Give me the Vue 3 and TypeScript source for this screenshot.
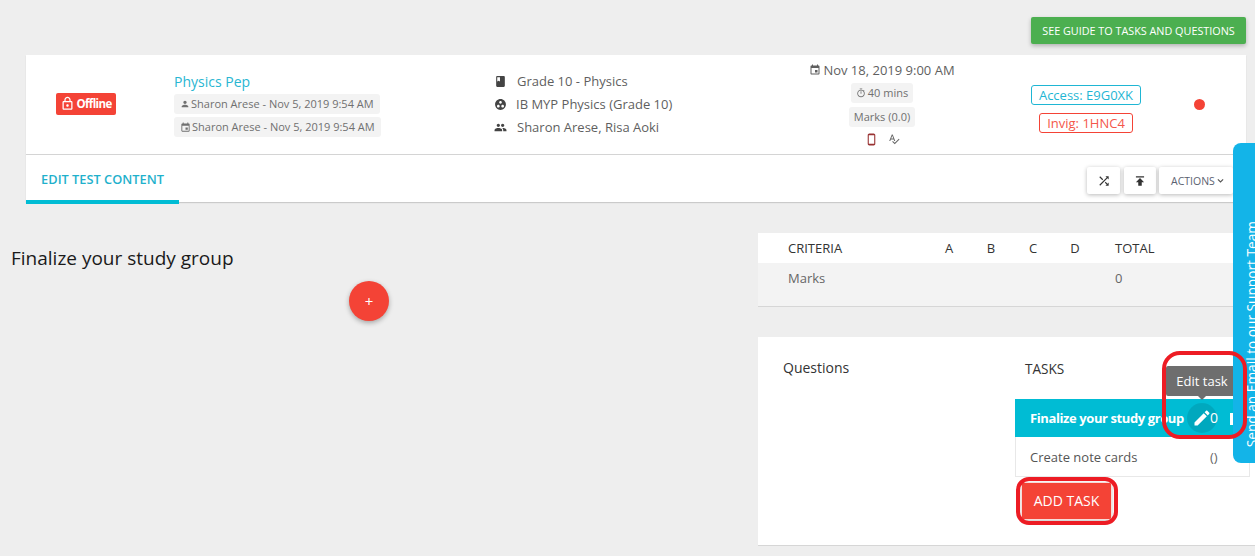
<script setup lang="ts">
const paths = {
  person: 'M12 12c2.21 0 4-1.79 4-4s-1.79-4-4-4-4 1.79-4 4 1.79 4 4 4zm0 2c-2.67 0-8 1.34-8 4v2h16v-2c0-2.66-5.33-4-8-4z',
  event: 'M17 12h-5v5h5v-5zM16 1v2H8V1H6v2H5c-1.11 0-1.99.9-1.99 2L3 19c0 1.1.89 2 2 2h14c1.1 0 2-.9 2-2V5c0-1.1-.9-2-2-2h-1V1h-2zm3 18H5V8h14v11z',
  timer: 'M15 1H9v2h6V1zm-4 13h2V8h-2v6zm8.03-6.61l1.42-1.42c-.43-.51-.9-.99-1.41-1.41l-1.42 1.42C16.07 4.74 14.12 4 12 4c-4.97 0-9 4.03-9 9s4.02 9 9 9 9-4.03 9-9c0-2.12-.74-4.07-1.97-5.61zM12 20c-3.87 0-7-3.13-7-7s3.13-7 7-7 7 3.13 7 7-3.13 7-7 7z',
  book: 'M18 2H6c-1.1 0-2 .9-2 2v16c0 1.1.9 2 2 2h12c1.1 0 2-.9 2-2V4c0-1.1-.9-2-2-2zM6 4h5v8l-2.5-1.5L6 12V4z',
  work: 'M12 2C6.48 2 2 6.48 2 12s4.48 10 10 10 10-4.48 10-10S17.52 2 12 2zM8 17.5c-1.38 0-2.5-1.12-2.5-2.5s1.12-2.5 2.5-2.5 2.5 1.12 2.5 2.5-1.12 2.5-2.5 2.5zM9.5 8c0-1.38 1.12-2.5 2.5-2.5s2.5 1.12 2.5 2.5-1.12 2.5-2.5 2.5S9.5 9.38 9.5 8zm6.5 9.5c-1.38 0-2.5-1.12-2.5-2.5s1.12-2.5 2.5-2.5 2.5 1.12 2.5 2.5-1.12 2.5-2.5 2.5z',
  group: 'M16 11c1.66 0 2.99-1.34 2.99-3S17.66 5 16 5c-1.66 0-3 1.34-3 3s1.34 3 3 3zm-8 0c1.66 0 2.99-1.34 2.99-3S9.66 5 8 5C6.34 5 5 6.34 5 8s1.34 3 3 3zm0 2c-2.33 0-7 1.17-7 3.5V19h14v-2.5c0-2.33-4.67-3.5-7-3.5zm8 0c-.29 0-.62.02-.97.05 1.16.84 1.97 1.97 1.97 3.45V19h6v-2.5c0-2.33-4.67-3.5-7-3.5z',
  spell: 'M12.45 16h2.09L9.43 3H7.57L2.46 16h2.09l1.12-3h5.64l1.14 3zm-6.02-5L8.5 5.48 10.57 11H6.43zm15.16.59l-8.09 8.09L9.83 16l-1.41 1.41 5.09 5.09L23 13l-1.41-1.41z',
  shuffle: 'M10.59 9.17L5.41 4 4 5.41l5.17 5.17 1.42-1.41zM14.5 4l2.04 2.04L4 18.59 5.41 20 17.96 7.46 20 9.5V4h-5.5zm.33 9.41l-1.41 1.41 3.13 3.13L14.5 20H20v-5.5l-2.04 2.04-3.13-3.13z',
  publish: 'M5 4v2h14V4H5zm0 10h4v6h6v-6h4l-7-7-7 7z',
  edit: 'M3 17.25V21h3.75L17.81 9.94l-3.75-3.75L3 17.25zM20.71 7.04c.39-.39.39-1.02 0-1.41l-2.34-2.34c-.39-.39-1.02-.39-1.41 0l-1.83 1.83 3.75 3.75 1.83-1.83z',
  lock: 'M18 8h-1V6c0-2.76-2.24-5-5-5S7 3.24 7 6v2H6c-1.1 0-2 .9-2 2v10c0 1.1.9 2 2 2h12c1.1 0 2-.9 2-2V10c0-1.1-.9-2-2-2zM9 6c0-1.66 1.34-3 3-3s3 1.34 3 3v2H9V6zm9 14H6V10h12v10zm-6-3c1.1 0 2-.9 2-2s-.9-2-2-2-2 .9-2 2 .9 2 2 2z',
  phone: 'M16 1H8C6.34 1 5 2.34 5 4v16c0 1.66 1.34 3 3 3h8c1.66 0 3-1.34 3-3V4c0-1.66-1.34-3-3-3zm1 19H7V4h10v16z',
}
const criteria = ['A', 'B', 'C', 'D']
</script>

<template>
  <div class="page">
    <div class="topbar">
      <button class="guide">SEE GUIDE TO TASKS AND QUESTIONS</button>
    </div>

    <section class="test-card">
      <div class="summary">
        <div class="col-status">
          <span class="offline">
            <svg viewBox="0 0 24 24" width="15" height="15"><path :d="paths.lock" /></svg>Offline
          </span>
        </div>
        <div class="col-title">
          <a class="title-link">Physics Pep</a>
          <span class="chip"><svg viewBox="0 0 24 24" width="10" height="10"><path :d="paths.person" /></svg>Sharon Arese - Nov 5, 2019 9:54 AM</span>
          <span class="chip"><svg viewBox="0 0 24 24" width="11" height="11"><path :d="paths.event" /></svg>Sharon Arese - Nov 5, 2019 9:54 AM</span>
        </div>
        <div class="col-meta">
          <div class="meta-row"><svg viewBox="0 0 24 24" width="13" height="13"><path :d="paths.book" /></svg><span class="meta-a">Grade 10 - Physics</span></div>
          <div class="meta-row"><svg viewBox="0 0 24 24" width="13" height="13"><path :d="paths.work" /></svg><span class="meta-b">IB MYP Physics (Grade 10)</span></div>
          <div class="meta-row"><svg viewBox="0 0 24 24" width="13" height="13"><path :d="paths.group" /></svg><span class="meta-a">Sharon Arese, Risa Aoki</span></div>
        </div>
        <div class="col-date">
          <div class="date"><svg viewBox="0 0 24 24" width="12" height="12"><path :d="paths.event" /></svg>Nov 18, 2019 9:00 AM</div>
          <span class="chip small"><svg viewBox="0 0 24 24" width="10" height="10"><path :d="paths.timer" /></svg>40 mins</span>
          <span class="chip small marks-chip">Marks (0.0)</span>
          <div class="date-icons">
            <svg class="red-icon" viewBox="0 0 24 24" width="13" height="13"><path :d="paths.phone" /></svg>
            <svg viewBox="0 0 24 24" width="12" height="12"><path :d="paths.spell" /></svg>
          </div>
        </div>
        <div class="col-codes">
          <span class="code access">Access: E9G0XK</span>
          <span class="code invig">Invig: 1HNC4</span>
        </div>
        <div class="col-dot"><span class="dot"></span></div>
      </div>

      <div class="tabbar">
        <div class="tab">EDIT TEST CONTENT</div>
        <div class="actions">
          <button class="act square-a"><svg viewBox="0 0 24 24" width="14" height="14"><path :d="paths.shuffle" /></svg></button>
          <button class="act square-b"><svg viewBox="0 0 24 24" width="14" height="14"><path :d="paths.publish" /></svg></button>
          <button class="act wide">ACTIONS<svg viewBox="0 0 24 24" width="7" height="7" class="chev"><path d="M3 8l9 9 9-9" /></svg></button>
        </div>
      </div>
    </section>

    <main class="content">
      <div class="left">
        <h2>Finalize your study group</h2>
        <div class="add-wrap"><button class="fab">+</button></div>
      </div>
      <div class="right">
        <section class="marks">
          <div class="marks-head">
            <span class="c-name">CRITERIA</span>
            <span v-for="c in criteria" :key="c" class="c-letter">{{ c }}</span>
            <span class="c-total">TOTAL</span>
          </div>
          <div class="marks-row">
            <span class="c-name">Marks</span>
            <span v-for="c in criteria" :key="c" class="c-letter"></span>
            <span class="c-total">0</span>
          </div>
        </section>

        <section class="tasks-card">
          <div class="questions">Questions</div>
          <div class="tasks">
            <div class="tasks-title">TASKS</div>
            <div class="task-list">
              <div class="task active">
                <span class="task-name">Finalize your study group</span>
                <span class="pen">
                  <svg viewBox="0 0 24 24" width="20" height="20"><path :d="paths.edit" /></svg>
                </span>
                <span class="count">0</span>
                <span class="cut-bar"></span>
                <div class="tooltip">Edit task</div>
              </div>
              <div class="task">
                <span class="task-name">Create note cards</span>
                <span class="count plain">()</span>
              </div>
            </div>
            <button class="add-task">ADD TASK</button>
          </div>
        </section>
      </div>
    </main>

    <aside class="support"><span>Send an Email to our Support Team</span></aside>
    <div class="ink ink-edit"></div>
    <div class="ink ink-add"></div>
  </div>
</template>

<style>
html, body { margin: 0; background: #eeeeee; overflow: hidden; }
</style>

<style scoped>
.page {
  position: relative;
  width: 1255px;
  height: 556px;
  overflow: hidden;
  background: #eeeeee;
  font-family: "Open Sans", "Noto Sans", sans-serif;
  color: #555;
}
svg { fill: currentColor; flex: none; }
button { font-family: inherit; border: 0; cursor: pointer; }

.topbar { display: flex; justify-content: flex-end; padding: 17px 9px 0 0; height: 55px; box-sizing: border-box; }
.guide {
  width: 215px; height: 27px; padding: 0; background: #4caf50; color: #fff; font-size: 10.8px;
  border-radius: 2px; box-shadow: 0 2px 4px rgba(0,0,0,.25);
}

.test-card { margin: 0 9px 0 26px; background: #fff; box-shadow: 0 1px 1px rgba(0,0,0,.15); height: 147px; }
.summary {
  display: grid; grid-template-columns: 148px 320px 286px 204px 204px 22px;
  height: 99px; border-bottom: 1px solid #d4d4d4; box-sizing: content-box; align-items: center;
}
.col-status { padding-left: 30px; }
.offline {
  display: inline-flex; align-items: center; justify-content: center; width: 60px; height: 22px;
  background: #f44336; color: #fff; border-radius: 2px; font-size: 11.5px; font-weight: 700; gap: 1px; letter-spacing: -.6px;
}
.col-title { display: flex; flex-direction: column; align-items: flex-start; gap: 3px; }
.title-link { color: #29b6d2; font-size: 14px; line-height: 19px; }
.chip {
  display: inline-flex; align-items: center; gap: 1px; background: #f3f3f3; border-radius: 3px;
  font-size: 11px; line-height: 20px; padding: 0 6px; color: #707070; white-space: nowrap;
}
.col-meta { display: flex; flex-direction: column; font-size: 13px; color: #5f5f5f; margin-top: -1px; }
.meta-row { display: flex; align-items: center; height: 23px; }
.meta-row svg { color: #444; }
.meta-a { margin-left: 10px; }
.meta-b { margin-left: 9px; }
.col-date { display: flex; flex-direction: column; align-items: center; gap: 3px; font-size: 13px; color: #5f5f5f; margin-top: -2px; }
.date { display: flex; align-items: center; gap: 2px; line-height: 18px; height: 18px; margin-bottom: 1px; }
.chip.small { padding: 0 5px; line-height: 20px; gap: 2px; }
.marks-chip { margin-top: 1px; }
.date-icons { display: flex; gap: 10px; height: 14px; align-items: center; color: #666; margin: 2px 0 0 1px; }
.red-icon { color: #933; }
.col-codes { display: flex; flex-direction: column; align-items: center; gap: 8px; margin-top: 8px; }
.code { font-size: 13px; line-height: 18px; border: 1px solid; border-radius: 3px; padding: 0 7px; }
.access { color: #1fb6d4; border-color: #1fb6d4; }
.invig { color: #f4574a; border-color: #f44336; }
.col-dot { display: flex; justify-content: center; }
.dot { width: 11px; height: 11px; background: #f44336; border-radius: 50%; }

.tabbar { display: flex; justify-content: space-between; height: 47px; }
.tab {
  width: 153px; height: 49px; box-sizing: border-box; border-bottom: 4px solid #00bcd4; color: #1fb1cc; font-size: 12.8px;
  font-weight: 600; text-align: center; line-height: 49px; white-space: nowrap; margin-bottom: -2px;
}
.actions { display: flex; padding: 12px 13px 0 0; height: 27px; }
.act {
  height: 27px; background: #fff; color: #333; border-radius: 2px; box-shadow: 0 1px 4px rgba(0,0,0,.28); padding: 0;
  display: flex; align-items: center; justify-content: center;
}
.square-a { width: 33px; margin-right: 4px; }
.square-b { width: 32px; margin-right: 3px; }
.wide { width: 74px; font-size: 10.5px; color: #5b6270; gap: 2px; justify-content: flex-start; padding-left: 12px; box-sizing: border-box; }
.chev { fill: none; stroke: #555; stroke-width: 4; }

.content { display: flex; align-items: flex-start; padding-top: 31px; }
.left { width: 758px; flex: none; }
.left h2 { margin: 0; padding: 12px 0 0 11px; font-size: 19px; line-height: 26px; font-weight: 400; color: #1a1a1a; }
.add-wrap { padding: 10px 0 0 349px; }
.fab {
  width: 40px; height: 40px; border-radius: 50%; background: #f44336; color: #fff; font-size: 15px; padding: 0;
  box-shadow: 0 2px 5px rgba(0,0,0,.3); display: block;
}
.right { width: 497px; flex: none; }
.marks { margin-right: 9px; background: #fff; height: 74px; border-bottom: 1px solid #d6d6d6; box-sizing: border-box; font-size: 13px; }
.marks-head, .marks-row { display: flex; padding-left: 30px; }
.marks-head { height: 30px; line-height: 31px; color: #333; }
.marks-row { height: 43px; line-height: 31px; background: #f3f3f3; color: #666; }
.c-name { width: 140px; flex: none; }
.c-letter { width: 42px; text-align: center; flex: none; }
.c-total { padding-left: 19px; }

.tasks-card {
  margin-top: 30px; background: #fff; height: 208px; display: flex; border-bottom: 1px solid #d6d6d6; box-sizing: content-box;
}
.questions { width: 257px; box-sizing: border-box; padding: 23px 0 0 25px; font-size: 14px; line-height: 16px; color: #333; }
.tasks { width: 235px; flex: none; }
.tasks-title { height: 62px; box-sizing: border-box; padding: 23px 0 0 10px; font-size: 13.6px; line-height: 17px; color: #333; }
.task-list { border: 1px solid #e8e8e8; border-top: 0; }
.task { position: relative; display: flex; align-items: center; height: 39px; padding-left: 14px; font-size: 13px; color: #555; }
.task.active { height: 38px; background: #00bcd4; color: #fff; font-weight: 700; margin: 0 -1px; padding-left: 15px; }
.task-name { width: 172px; white-space: nowrap; flex: none; }
.task.active .task-name { font-size: 13px; letter-spacing: -.4px; }
.pen {
  position: absolute; left: 172px; top: 4px; width: 30px; height: 30px; border-radius: 50%;
  background: rgba(0,0,0,.1); display: flex; align-items: center; justify-content: center;
}
.count { position: absolute; left: 195px; top: 10px; font-size: 14px; font-weight: 400; line-height: 18px; }
.count.plain { left: 194px; top: 11px; color: #666; font-size: 13px; }
.cut-bar { position: absolute; left: 215px; top: 14px; width: 3px; height: 12px; background: #fff; }
.tooltip {
  position: absolute; left: 151px; top: -33px; width: 72px; height: 30px; background: #6e6e6e; color: #fff; font-size: 13px;
  font-weight: 400; line-height: 30px; text-align: center; border-radius: 2px; letter-spacing: 0;
}
.tooltip::after {
  content: ""; position: absolute; left: 32px; top: 30px; border: 4px solid transparent; border-top-color: #6e6e6e; border-bottom: 0;
}
.add-task {
  display: block; margin: 5px 0 0 6px; width: 91px; height: 38px; padding: 0 0 2px; background: #f44336; color: #fff;
  font-size: 14px; border-radius: 2px; border: 1px solid #f6dcd9; box-shadow: 0 1px 3px rgba(0,0,0,.25);
}

.support {
  position: absolute; left: 1233px; top: 143px; width: 28px; height: 320px; background: #13b4e8;
  border-radius: 8px 0 0 8px;
}
.support span {
  position: absolute; left: 12px; bottom: 16px; writing-mode: vertical-rl; transform: rotate(180deg);
  color: #fff; font-size: 13.7px; line-height: 14px; white-space: nowrap;
}
.ink { position: absolute; border: 4px solid #ed1c24; box-sizing: border-box; }
.ink-edit { left: 1162px; top: 351px; width: 85px; height: 88px; border-radius: 18px; }
.ink-add { left: 1016px; top: 477px; width: 102px; height: 48px; border-radius: 13px; }
</style>
